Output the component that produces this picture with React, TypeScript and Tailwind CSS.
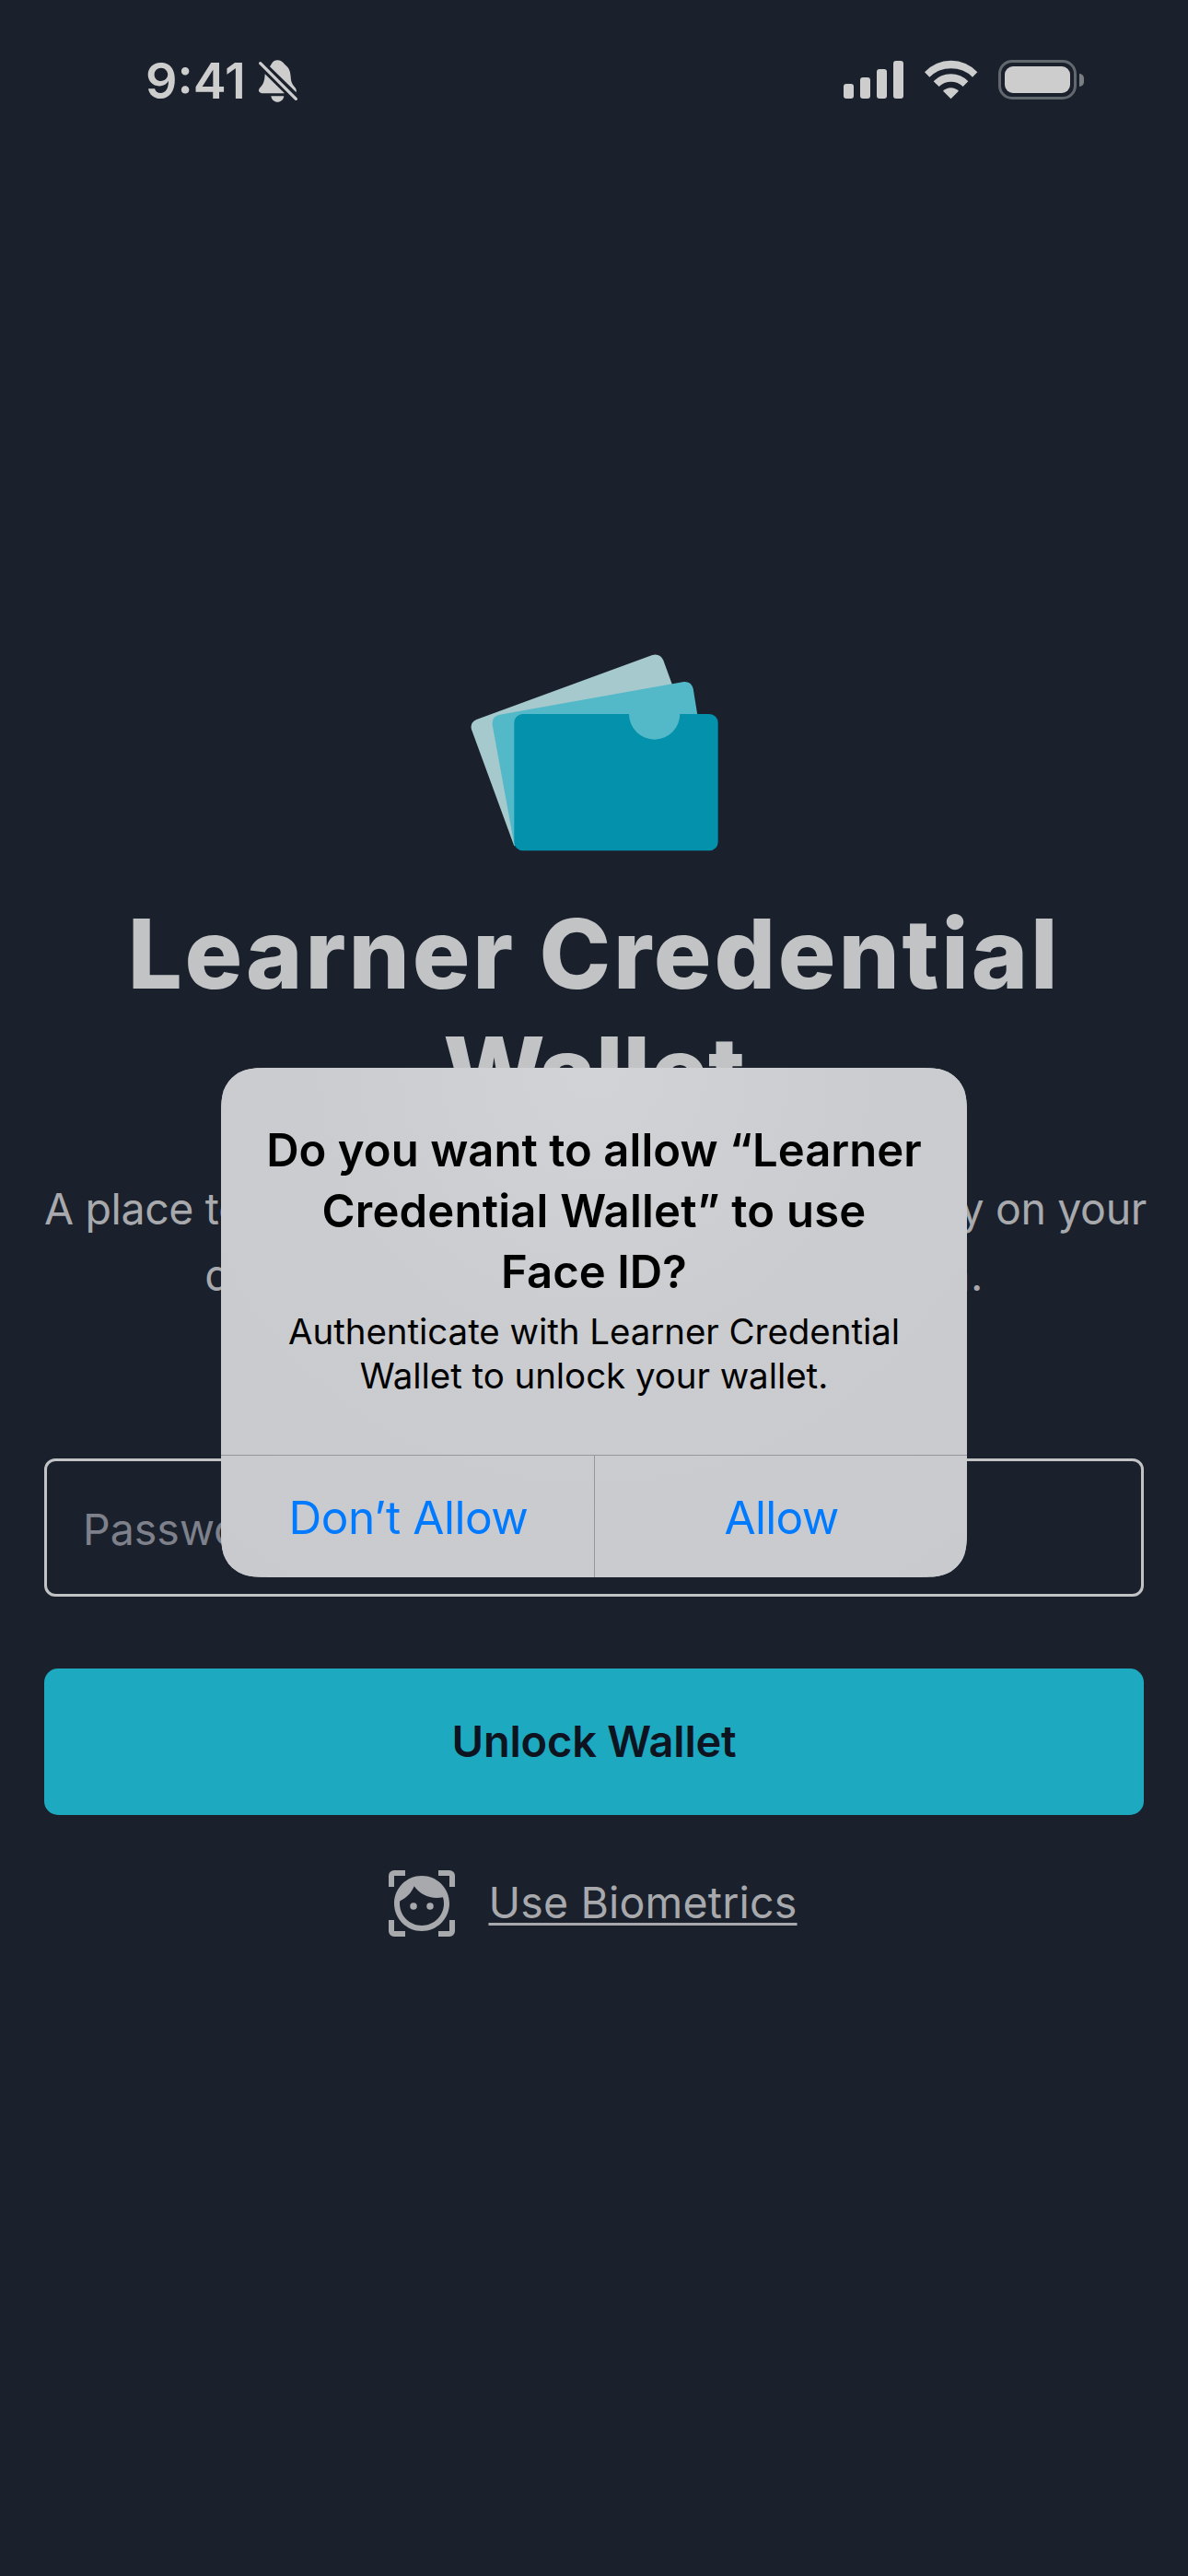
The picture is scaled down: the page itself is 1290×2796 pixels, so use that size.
function StatusBar() {
  return (
    <div className="flex h-[172px] items-start justify-between pl-[158px] pr-[113px] pt-[64px] text-[#cdcdcd]">
      <div className="flex items-start">
        <div className="w-[122px] whitespace-nowrap text-[54px] font-semibold leading-[48px]">9:41</div>
        <svg className="h-12 w-11" viewBox="450 72 132 144" fill="currentColor">
          <path d="M489 97C496 88 497 77 514 76C531 77 533 87 541 93C553 102 556 115 557 130C558 150 563 155 573 167Q577 174 575 181Z" />
          <path d="M473 121L537 184H462Q448 180 455 168C468 155 472 145 473 121Z" />
          <path d="M493 193H535C532 219 496 219 493 193Z" />
          <path d="M458 86L574 202" stroke="currentColor" strokeWidth="10" strokeLinecap="round" />
        </svg>
      </div>
      <div className="flex h-[46px] items-start">
        <div className="mr-[22px] mt-[2px] flex h-[41px] items-end gap-[7px]">
          <div className="h-4 w-[11px] rounded-[3px] bg-current" />
          <div className="h-[23px] w-[11px] rounded-[3px] bg-current" />
          <div className="h-8 w-[11px] rounded-[3px] bg-current" />
          <div className="h-[41px] w-[11px] rounded-[3px] bg-current" />
        </div>
        <svg className="mr-[22px] h-11 w-[59px]" viewBox="339 72 177 132" fill="currentColor">
          <path d="M342 115A117 117 0 0 1 514 115L498 131A100 100 0 0 0 358 131Z" />
          <path d="M371 145A78 78 0 0 1 484 145L467 162A56 56 0 0 0 389 162Z" />
          <path d="M402 176A36 36 0 0 1 453 176L427.500 202Z" />
        </svg>
        <div className="mt-px flex items-center gap-[3px]">
          <div className="h-[43px] w-[85px] rounded-[15px] border-[3px] border-[#63676e] p-1">
            <div className="h-full w-full rounded-[9px] bg-current" />
          </div>
          <div className="h-[14px] w-[5px] rounded-r-full bg-[#7b7e83]" />
        </div>
      </div>
    </div>
  );
}

function WalletLogo() {
  return (
    <svg className="h-[250px] w-[310px] self-center" viewBox="0 0 930 750">
      <path fill="#a6c9cd" d="M205 685L66 305Q60 283 82 273L655 63Q680 57 691 80L760 270L300 600Z" />
      <path fill="#53b9c8" d="M206 685L134 290Q131 262 158 257L758 150Q782 149 788 172L802 258V360H500L300 600Z" />
      <path fill="#0391ab" d="M233 255H579A83 83 0 0 0 745 255H841A28 28 0 0 1 869 283V672A28 28 0 0 1 841 700H233A28 28 0 0 1 205 672V283A28 28 0 0 1 233 255Z" />
    </svg>
  );
}

function FaceScanIcon() {
  return (
    <svg className="h-[72px] w-[72px]" viewBox="0 0 24 24" fill="currentColor">
      <path d="M9 11.750a1.250 1.250 0 1 0 0 2.500 1.250 1.250 0 0 0 0-2.500zm6 0a1.250 1.250 0 1 0 0 2.500 1.250 1.250 0 0 0 0-2.500zM12 2C6.480 2 2 6.480 2 12s4.480 10 10 10 10-4.480 10-10S17.520 2 12 2zm0 18c-4.410 0-8-3.590-8-8 0-.29.02-.58.05-.86 2.360-1.050 4.230-2.980 5.210-5.370C11.070 8.330 14.050 10 17.420 10c.78 0 1.530-.09 2.250-.26.21.71.33 1.470.33 2.260 0 4.410-3.590 8-8 8z" />
      <path d="M0 2a2 2 0 0 1 2-2h4v2H2v4H0zM24 2a2 2 0 0 0-2-2h-4v2h4v4h2zM0 22a2 2 0 0 0 2 2h4v-2H2v-4H0zM24 22a2 2 0 0 1-2 2h-4v-2h4v-4h2z" />
    </svg>
  );
}

// Permission prompt with continuous-curvature corners.
function PermissionDialog() {
  return (
    <div
      role="dialog"
      className="absolute left-[240px] top-[1159px] flex h-[553px] w-[810px] flex-col bg-[#c9cacd] bg-[radial-gradient(circle_at_50%_0%,#d2d3d6_0%,#cbccd0_45%,#c9cacd_100%)] text-center text-black [clip-path:path('M60_0H750C768_0_776_0_785.400_2.900C795.500_6.600_803.400_14.500_807.100_24.600C810_34_810_42_810_60V493C810_511_810_519_807.100_528.400C803.400_538.500_795.500_546.400_785.400_550.100C776_553_768_553_750_553H60C42_553_34_553_24.600_550.100C14.500_546.400_6.600_538.500_2.900_528.400C0_519_0_511_0_493V60C0_42_0_34_2.900_24.600C6.600_14.500_14.500_6.600_24.600_2.900C34_0_42_0_60_0Z')]"
    >
      <div className="flex h-[421px] flex-col items-center whitespace-nowrap border-b border-[#95979c] pt-[57px]">
        <h2 className="text-[49px] font-semibold leading-[66px] tracking-[0.05px]">
          Do you want to allow “Learner
          <br />
          <span className="tracking-[0.2px]">Credential Wallet” to use</span>
          <br />
          Face ID?
        </h2>
        <p className="mt-[7px] text-[38.500px] leading-[48px] tracking-[-0.06px]">
          Authenticate with Learner Credential
          <br />
          Wallet to unlock your wallet.
        </p>
      </div>
      <div className="grid flex-1 grid-cols-2 text-[49.500px] tracking-[-0.45px] text-[#007aff]">
        <button className="pl-[2px] pt-[2px]">Don’t Allow</button>
        <button className="border-l border-[#95979c] pl-px pt-[2px] tracking-[-0.7px]">Allow</button>
      </div>
    </div>
  );
}

export default function App() {
  return (
    <div className="relative flex h-[2796px] w-[1290px] flex-col overflow-hidden bg-[#1a212c] font-[Inter,sans-serif]">
      <StatusBar />
      <main className="flex flex-col px-12 pt-[518px]">
        <WalletLogo />
        <h1 className="mt-[31px] whitespace-nowrap text-center text-[104.500px] font-extrabold leading-[128px] text-[#c2c3c5]">
          <span className="tracking-[2.8px]">Learner Credential</span>
          <br />
          <span>Wallet</span>
        </h1>
        <p className="mt-[49px] whitespace-nowrap text-center text-[46.500px] leading-[72px] text-[#a8a9ac]">
          <span className="tracking-[-0.37px]">A place to manage all your credentials securely on your</span>
          <br />
          <span className="tracking-[0.5px]">device and share them as you sign in.</span>
        </p>
        <div className="mt-[163px] flex h-[150px] items-center rounded-xl border-[3px] border-[#c2c3c5] px-[39px] pt-[6px] text-[46.500px] text-[#7e818b]">Password</div>
        <button className="mt-[78px] h-[159px] rounded-[15px] bg-[#1da9bf] text-[47px] font-semibold tracking-[-0.2px] text-[#0d131f]">Unlock Wallet</button>
        <div className="mt-[60px] flex items-center justify-center gap-9 pr-[2px] text-[#a8a9ac]">
          <FaceScanIcon />
          <a className="text-[46.500px] leading-[70px] tracking-[0.18px] underline decoration-[3px] underline-offset-[5px] [text-decoration-skip-ink:none] pb-[2px]">Use Biometrics</a>
        </div>
      </main>
      <PermissionDialog />
    </div>
  );
}
